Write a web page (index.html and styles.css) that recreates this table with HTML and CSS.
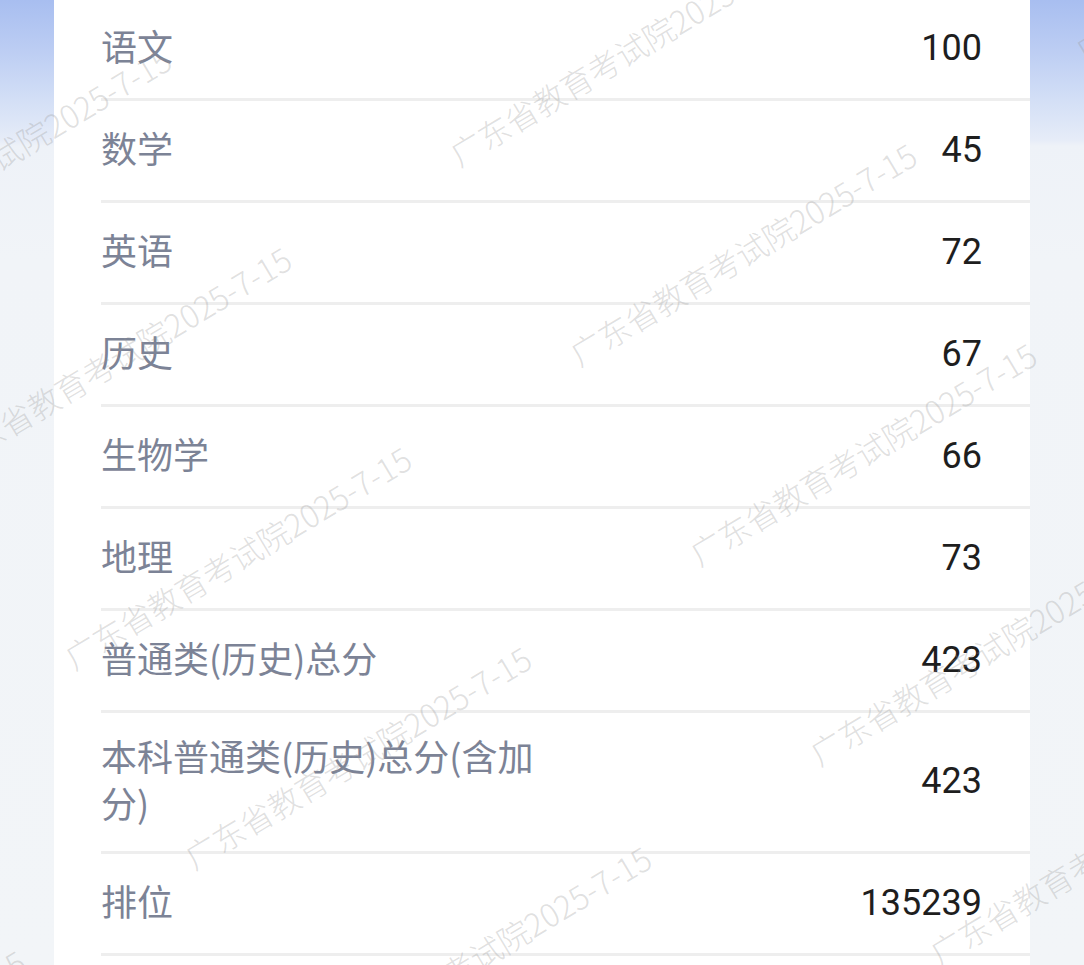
FILE: index.html
```html
<!DOCTYPE html>
<html lang="zh-CN">
<head>
<meta charset="utf-8">
<title>成绩查询</title>
<link rel="stylesheet" href="styles.css">
</head>
<body>
<div class="page">
  <div class="card">
    <div class="row"><span class="label">语文</span><span class="value">100</span></div>
    <div class="row"><span class="label">数学</span><span class="value">45</span></div>
    <div class="row"><span class="label">英语</span><span class="value">72</span></div>
    <div class="row"><span class="label">历史</span><span class="value">67</span></div>
    <div class="row"><span class="label">生物学</span><span class="value">66</span></div>
    <div class="row"><span class="label">地理</span><span class="value">73</span></div>
    <div class="row"><span class="label">普通类(历史)总分</span><span class="value">423</span></div>
    <div class="row"><span class="label">本科普通类(历史)总分(含加分)</span><span class="value">423</span></div>
    <div class="row"><span class="label">排位</span><span class="value">135239</span></div>
    <div class="row"><span class="label"></span><span class="value"></span></div>
  </div>
</div>
<div class="watermarks">
  <div class="wm-field">
    <div class="wm-row"><span>广东省教育考试院2025-7-15</span><span>广东省教育考试院2025-7-15</span><span>广东省教育考试院2025-7-15</span><span>广东省教育考试院2025-7-15</span><span>广东省教育考试院2025-7-15</span><span>广东省教育考试院2025-7-15</span></div>
    <div class="wm-row"><span>广东省教育考试院2025-7-15</span><span>广东省教育考试院2025-7-15</span><span>广东省教育考试院2025-7-15</span><span>广东省教育考试院2025-7-15</span><span>广东省教育考试院2025-7-15</span><span>广东省教育考试院2025-7-15</span></div>
    <div class="wm-row"><span>广东省教育考试院2025-7-15</span><span>广东省教育考试院2025-7-15</span><span>广东省教育考试院2025-7-15</span><span>广东省教育考试院2025-7-15</span><span>广东省教育考试院2025-7-15</span><span>广东省教育考试院2025-7-15</span></div>
    <div class="wm-row"><span>广东省教育考试院2025-7-15</span><span>广东省教育考试院2025-7-15</span><span>广东省教育考试院2025-7-15</span><span>广东省教育考试院2025-7-15</span><span>广东省教育考试院2025-7-15</span><span>广东省教育考试院2025-7-15</span></div>
    <div class="wm-row"><span>广东省教育考试院2025-7-15</span><span>广东省教育考试院2025-7-15</span><span>广东省教育考试院2025-7-15</span><span>广东省教育考试院2025-7-15</span><span>广东省教育考试院2025-7-15</span><span>广东省教育考试院2025-7-15</span></div>
    <div class="wm-row"><span>广东省教育考试院2025-7-15</span><span>广东省教育考试院2025-7-15</span><span>广东省教育考试院2025-7-15</span><span>广东省教育考试院2025-7-15</span><span>广东省教育考试院2025-7-15</span><span>广东省教育考试院2025-7-15</span></div>
  </div>
</div>
</body>
</html>
```

FILE: styles.css
```css
html, body {
  margin: 0;
  padding: 0;
}
body {
  width: 1084px;
  height: 965px;
  overflow: hidden;
  position: relative;
  font-family: "Noto Sans CJK SC", "Noto Sans", sans-serif;
  background: linear-gradient(to bottom, #a8bef0 0px, #bccdf3 50px, #d3dff6 100px, #e6ecf8 140px, #eef2f8 146px, #f1f4f8 260px, #f2f5f8 965px);
}
.page {
  padding: 0 54px;
}
.card {
  background: #ffffff;
  margin-top: -1px;
  padding-left: 47px;
  min-height: 1100px;
}
.row {
  display: flex;
  align-items: center;
  justify-content: space-between;
  box-sizing: border-box;
  min-height: 102px;
  padding: 24px 48px 25px 0;
  border-bottom: 3px solid #eeeeee;
}
.label {
  max-width: 50%;
  margin-top: -5px;
  font-size: 36px;
  line-height: 47px;
  color: #7c8396;
}
.value {
  font-family: Roboto, "Noto Sans", sans-serif;
  font-size: 36px;
  line-height: 47px;
  color: #1e1e1e;
}
.watermarks {
  position: absolute;
  left: 0;
  top: 0;
  width: 1084px;
  height: 965px;
  overflow: hidden;
  pointer-events: none;
}
.wm-field {
  position: absolute;
  left: 578px;
  top: 366px;
  transform-origin: 0 0;
  transform: rotate(-31deg) translate(-1768px, -494px);
}
.wm-row {
  display: flex;
  height: 233px;
}
.wm-row span {
  flex: 0 0 589.5px;
  white-space: nowrap;
  font-family: "Noto Sans CJK SC", sans-serif;
  font-weight: 300;
  font-size: 32px;
  line-height: 32px;
  color: rgba(150, 150, 150, 0.3);
}
```
